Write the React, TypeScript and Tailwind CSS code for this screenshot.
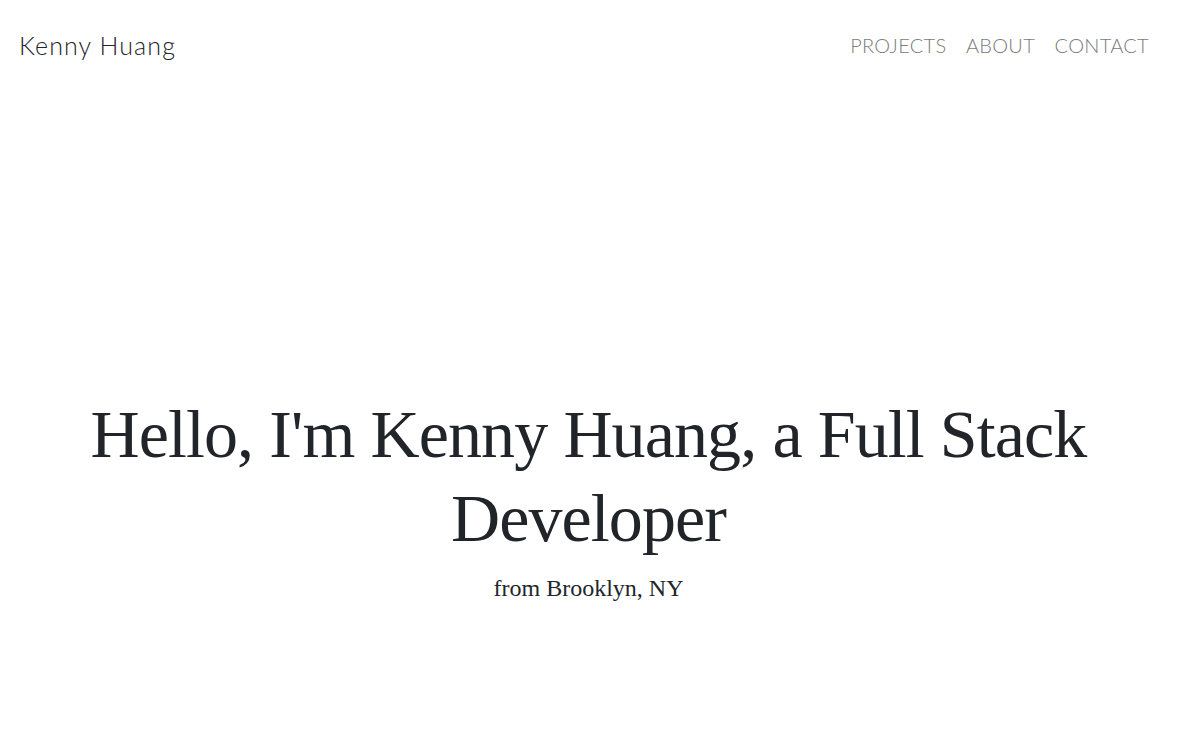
export default function App() {
  return (
    <div className="min-h-[746px] bg-white flex flex-col">
      <header className="flex items-center justify-between h-[90px] pl-[19px] pr-[28px]">
        <span className="text-[25px] text-[#212529] font-[Lato,'Noto_Sans',sans-serif] font-light leading-none tracking-[1.1px]">
          Kenny Huang
        </span>
        <nav className="flex gap-[19.5px] text-[20px] text-[#7b7b7b] font-[Lato,'Noto_Sans',sans-serif] font-light leading-none tracking-[0.3px]">
          <span>PROJECTS</span>
          <span>ABOUT</span>
          <span>CONTACT</span>
        </nav>
      </header>
      <main className="flex flex-col items-center text-center pt-[302px] px-[80px] text-[#212529] font-['Liberation_Serif',serif]">
        <h1 className="text-[68px] leading-[84px] tracking-[-0.9px]">
          Hello, I'm Kenny Huang, a Full Stack Developer
        </h1>
        <p className="text-[24px] leading-[32px] mt-[12px]">from Brooklyn, NY</p>
      </main>
    </div>
  );
}
